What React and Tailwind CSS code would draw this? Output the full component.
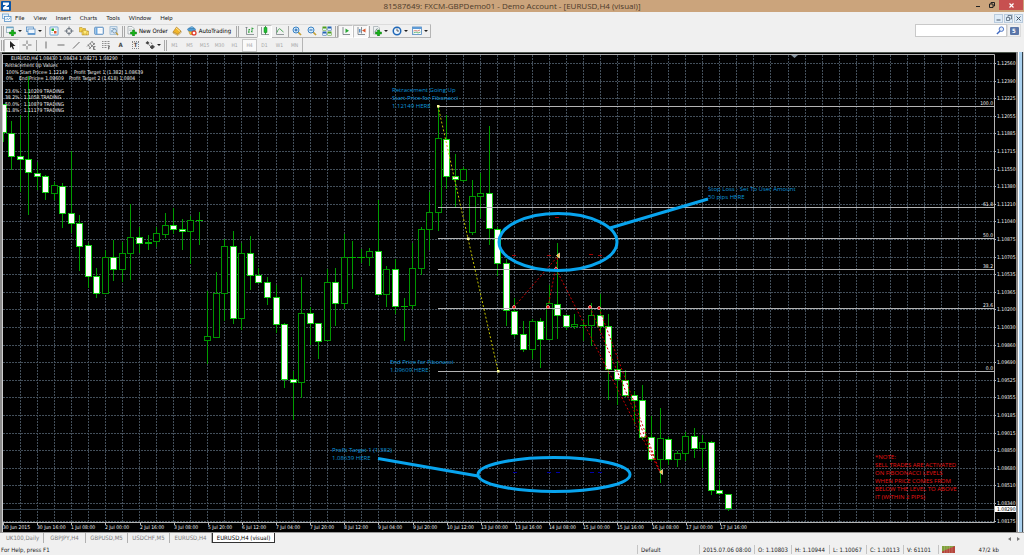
import React, { useState } from 'react';

const MENU = ['File', 'View', 'Insert', 'Charts', 'Tools', 'Window', 'Help'];
const TIMEFRAMES = ['M1', 'M5', 'M15', 'M30', 'H1', 'H4', 'D1', 'W1', 'MN'];
const TABS = ['UK100,Daily', 'GBPJPY,H4', 'GBPUSD,M5', 'USDCHF,M5', 'EURUSD,H4', 'EURUSD,H4 (visual)'];

const PRICES = [
  '1.12560', '1.12390', '1.12225', '1.12055', '1.11885', '1.11715', '1.11550', '1.11380', '1.11210',
  '1.11040', '1.10875', '1.10705', '1.10535', '1.10365', '1.10200', '1.10030', '1.09860', '1.09690',
  '1.09525', '1.09355', '1.09185', '1.09015', '1.08850', '1.08680', '1.08510', '1.08340', '1.08175',
];

const TIMES = [
  '30 Jun 2015', '30 Jun 16:00', '1 Jul 08:00', '2 Jul 00:00', '2 Jul 16:00', '3 Jul 08:00', '5 Jul 20:00',
  '6 Jul 12:00', '7 Jul 04:00', '7 Jul 20:00', '8 Jul 12:00', '9 Jul 04:00', '9 Jul 20:00', '10 Jul 12:00',
  '13 Jul 00:00', '13 Jul 16:00', '14 Jul 08:00', '15 Jul 00:00', '15 Jul 16:00', '16 Jul 08:00',
  '17 Jul 00:00', '17 Jul 16:00',
];

const FIB_LEVELS = [
  ['100.0', 106], ['61.8', 207], ['50.0', 238], ['38.2', 269], ['23.6', 308], ['0.0', 371],
];

// [wick top, wick bottom, body top, body bottom, kind]  d = down, u = up, x = doji
const CANDLES = [
  [104, 142, 104, 133, 'd'], [121, 170, 133, 157, 'd'], [115, 192, 156, 160, 'd'], [76, 215, 159, 173, 'd'],
  [162, 190, 173, 177, 'd'], [175, 200, 176, 193, 'd'], [182, 200, 185, 194, 'u'], [183, 228, 186, 214, 'd'],
  [151, 233, 213, 224, 'd'], [215, 271, 223, 247, 'd'], [243, 288, 245, 277, 'd'], [268, 298, 276, 294, 'd'],
  [250, 294, 257, 294, 'u'], [240, 281, 257, 270, 'd'], [242, 282, 253, 270, 'u'], [204, 280, 237, 254, 'u'],
  [227, 253, 237, 244, 'd'], [235, 250, 242, 244, 'x'], [227, 247, 233, 242, 'u'], [213, 238, 225, 235, 'u'],
  [208, 234, 225, 230, 'd'], [219, 250, 229, 232, 'd'], [216, 264, 220, 232, 'u'], [212, 245, 220, 221, 'x'],
  [291, 364, 336, 341, 'u'], [272, 338, 293, 338, 'u'], [239, 321, 246, 294, 'u'], [231, 324, 246, 319, 'd'],
  [243, 330, 253, 319, 'u'], [236, 290, 253, 276, 'd'], [268, 283, 275, 283, 'd'], [277, 305, 282, 298, 'd'],
  [285, 333, 297, 325, 'd'], [323, 388, 324, 380, 'd'], [371, 420, 379, 383, 'd'], [277, 398, 313, 383, 'u'],
  [307, 345, 313, 324, 'd'], [323, 359, 323, 342, 'd'], [269, 341, 282, 341, 'u'], [268, 326, 282, 304, 'd'],
  [234, 309, 257, 304, 'u'], [241, 289, 257, 258, 'x'], [249, 263, 257, 258, 'x'], [248, 266, 251, 258, 'u'],
  [200, 295, 251, 295, 'd'], [266, 307, 269, 295, 'u'], [259, 314, 269, 307, 'd'], [298, 341, 306, 307, 'x'],
  [243, 309, 268, 306, 'u'], [227, 275, 229, 269, 'u'], [192, 250, 212, 230, 'u'], [106, 231, 138, 213, 'u'],
  [115, 189, 139, 177, 'd'], [154, 207, 176, 180, 'd'], [167, 182, 169, 181, 'u'], [180, 235, 196, 233, 'u'],
  [173, 218, 193, 197, 'u'], [126, 245, 193, 229, 'd'], [227, 276, 229, 264, 'd'], [259, 326, 263, 311, 'd'],
  [298, 337, 311, 335, 'd'], [321, 352, 334, 350, 'd'], [319, 359, 321, 350, 'u'], [318, 368, 321, 340, 'd'],
  [285, 340, 303, 340, 'u'], [243, 339, 304, 316, 'd'], [315, 330, 315, 327, 'd'], [314, 329, 324, 327, 'u'],
  [320, 341, 325, 326, 'x'], [303, 346, 315, 326, 'u'], [294, 333, 315, 327, 'd'], [314, 400, 326, 370, 'd'],
  [361, 405, 369, 380, 'd'], [370, 397, 380, 396, 'd'], [391, 424, 395, 401, 'd'], [385, 440, 400, 438, 'd'],
  [416, 461, 437, 460, 'd'], [408, 483, 438, 460, 'u'], [437, 465, 439, 460, 'd'], [451, 467, 453, 460, 'u'],
  [432, 461, 436, 454, 'u'], [428, 458, 436, 449, 'd'], [435, 468, 442, 449, 'u'], [441, 495, 442, 491, 'd'],
  [480, 495, 490, 494, 'd'], [494, 511, 494, 509, 'd'],
];

const NOTES = [
  { x: 392, y: 92, lines: ['Retracement Going Up', 'Start Price for Fibonacci', '1.12149 HERE'] },
  { x: 708, y: 191, lines: ['Stop Loss - Set To User Amount', '50 pips HERE'] },
  { x: 390, y: 364, lines: ['End Price for Fibonacci', '1.09609 HERE'] },
  { x: 332, y: 452, lines: ['Profit Target 1 (1.382)', '1.08639 HERE'] },
];

const WARNING = [
  '*NOTE:', 'SELL TRADES ARE ACTIVATED', 'ON FIBOONACCI LEVELS', 'WHEN PRICE COMES FROM',
  'BELOW THE LEVEL TO ABOVE', 'IT (WITHIN 2 PIPS)',
];

const HEADER = [
  [11, 60, 'EURUSD,H4  1.08430 1.08434 1.08271 1.08290'],
  [5, 67, 'Retracement Up Values'],
  [6, 74, '100% Start Price= 1.12149'],
  [74, 74, 'Profit Target 1 (1.382) 1.08639'],
  [6, 80, '0%'],
  [19, 80, 'End Price= 1.09609'],
  [69, 80, 'Profit Target 2 (1.618) 1.0804'],
  [5, 93, '23.6% : 1.10209 TRADING'],
  [5, 99, '38.2% : 1.1058 TRADING'],
  [5, 106, '50.0% : 1.10879 TRADING'],
  [5, 112, '61.8% : 1.11179 TRADING'],
];

const TRADES = [
  [514, 307, 558, 256], [548, 307, 558, 256], [556, 269, 660, 472], [590, 307, 660, 472], [599, 308, 660, 472],
];

function Icon({ children, size = 'size-[10px]' }) {
  return <svg viewBox="0 0 20 20" className={`${size} shrink-0`} aria-hidden="true">{children}</svg>;
}

const plus = <path d="M11 8h4v4h4v4h-4v4h-4v-4H7v-4h4z" fill="#17b317" stroke="#0b7a10" />;

const ICONS = {
  newChart: (
    <Icon>
      <rect x="1" y="2" width="14" height="11" fill="#f3f8fb" stroke="#5d8191" />
      <path d="M1 3h14" stroke="#6fa8c9" strokeWidth="3" />
      {plus}
    </Icon>
  ),
  profiles: (
    <Icon>
      <rect x="1" y="2" width="14" height="9" fill="#e4f0fb" stroke="#4f86bd" strokeWidth="1.5" />
      <rect x="4" y="6" width="14" height="11" fill="#eef6fd" stroke="#4f86bd" strokeWidth="1.5" />
      <path d="M4 14h14v3H4z" fill="#5c97d0" />
    </Icon>
  ),
  market: (
    <Icon>
      <rect x="2" y="2" width="16" height="16" rx="1" fill="#f8fcff" stroke="#4b8fc9" strokeWidth="1.6" />
      <path d="M5 5h5v5H5z" fill="#26a83a" />
      <path d="M10 10h5v5h-5z" fill="#e0532c" />
      <path d="M12 6h4M5 13h3" stroke="#9cc" strokeWidth="1.5" />
    </Icon>
  ),
  target: (
    <Icon>
      <circle cx="10" cy="10" r="5.5" fill="none" stroke="#66707a" strokeWidth="1.8" />
      <path d="M10 1v7M10 12v7M1 10h7M12 10h7" stroke="#66707a" strokeWidth="1.8" />
    </Icon>
  ),
  navigator: (
    <Icon>
      <path d="M1 3h5l2 2h5v7H1z" fill="#f6d24a" stroke="#ad851b" />
      <path d="M6 8h5l2 2h6v8H6z" fill="#fbdf6d" stroke="#ad851b" />
      <path d="M12 7l2 3 4 .5-3 3 1 4-4-2-4 2 1-4-3-3 4-.5z" fill="#ffec7c" stroke="#b98b16" />
    </Icon>
  ),
  terminal: (
    <Icon>
      <rect x="1.5" y="2.5" width="17" height="14" rx="1" fill="#fff" stroke="#3c7ab8" strokeWidth="1.8" />
      <path d="M3 4h4v12H3z" fill="#6ea9df" />
      <path d="M9 7h7M9 10h7" stroke="#dce6ef" />
    </Icon>
  ),
  tester: (
    <Icon>
      <rect x="2" y="1.5" width="14" height="15" fill="#e4eef7" stroke="#7aa2c4" strokeWidth="1.3" />
      <path d="M5 5h8M5 13V8" stroke="#4682b4" />
      <circle cx="11" cy="10" r="4" fill="#cfe8fb" stroke="#768ca0" strokeWidth="1.5" />
      <path d="M14 13l4 5" stroke="#c19a39" strokeWidth="2.6" />
    </Icon>
  ),
  order: (
    <Icon>
      <path d="M2 1h8l4 4v11H2z" fill="#f6f8f8" stroke="#6d7a80" />
      <path d="M4 6h6M4 9h5" stroke="#8c9aa1" />
      {plus}
    </Icon>
  ),
  editor: (
    <Icon>
      <path d="M2 12l7-10 9 8-6 7z" fill="#f0b52c" stroke="#a36c10" />
      <path d="M2 12l10 5 6-7v3l-6 6-10-5z" fill="#fff1b5" stroke="#a36c10" />
      <path d="M8 4l8 7" stroke="#ffe494" strokeWidth="2" />
    </Icon>
  ),
  auto: (
    <Icon>
      <path d="M3 9h14l-3 8H6z" fill="#f2c53a" stroke="#af8120" />
      <ellipse cx="9" cy="7" rx="8" ry="3.6" fill="#4c9bd4" stroke="#2a6a9f" />
      <path d="M5 5c1-5 8-5 9 0z" fill="#75bbea" stroke="#2a6a9f" />
      <circle cx="14" cy="14" r="5.2" fill="#dd2d1c" />
      <path d="M11.5 11.5h5v5h-5z" fill="#fff" />
    </Icon>
  ),
  bars: (
    <Icon>
      <path d="M3 2v15h15M1 4l2-2 2 2" fill="none" stroke="#6a7278" strokeWidth="1.4" />
      <path d="M8 6v8M6 12h2M8 7h2M14 3v10M12 11h2M14 5h3" stroke="#249b32" strokeWidth="1.7" />
    </Icon>
  ),
  candles: (
    <Icon>
      <path d="M3 2v15h15" fill="none" stroke="#6a7278" strokeWidth="1.4" />
      <path d="M11 0v17" stroke="#12881f" strokeWidth="1.6" />
      <path d="M8 3h6v10H8z" fill="#20bd34" stroke="#12881f" />
    </Icon>
  ),
  line: (
    <Icon>
      <path d="M3 2v15h15" fill="none" stroke="#6a7278" strokeWidth="1.4" />
      <path d="M4 13c3-9 6-9 8-5l5 4" fill="none" stroke="#2d9b3b" strokeWidth="1.6" />
    </Icon>
  ),
  zoomIn: (
    <Icon>
      <path d="M12 12l6 6" stroke="#c6a036" strokeWidth="3.4" />
      <circle cx="8" cy="8" r="6" fill="#d4ecfd" stroke="#3b82c4" strokeWidth="2" />
      <path d="M8 5v6M5 8h6" stroke="#1d62ac" strokeWidth="2" />
    </Icon>
  ),
  zoomOut: (
    <Icon>
      <path d="M12 12l6 6" stroke="#c6a036" strokeWidth="3.4" />
      <circle cx="8" cy="8" r="6" fill="#d4ecfd" stroke="#3b82c4" strokeWidth="2" />
      <path d="M5 8h6" stroke="#1d62ac" strokeWidth="2" />
    </Icon>
  ),
  tile: (
    <Icon>
      <path d="M1 1h8v8H1zM11 11h8v8h-8z" fill="#4e9e1e" />
      <path d="M11 1h8v8h-8zM1 11h8v8H1z" fill="#2664b4" />
      <path d="M2 5h6v3H2zM12 5h6v3h-6zM2 15h6v3H2zM12 15h6v3h-6z" fill="#e6f2fa" />
    </Icon>
  ),
  scroll: (
    <Icon>
      <path d="M4 2v15h14" fill="none" stroke="#6a7278" strokeWidth="1.6" />
      <path d="M9 5l7 4.5-7 4.5z" fill="#26a534" />
    </Icon>
  ),
  shift: (
    <Icon>
      <path d="M4 2v15h14M11 2v13" fill="none" stroke="#6a7278" strokeWidth="1.6" />
      <path d="M19 5v8l-7-4z" fill="#d8552d" />
      <path d="M6 6h3v7H6z" fill="#5a93c9" />
    </Icon>
  ),
  indicators: (
    <Icon>
      <path d="M3 1h9l3 3v12H3z" fill="#edf1f2" stroke="#7d8a90" />
      <path d="M5 12c3 0 3-7 6-7" fill="none" stroke="#5a6970" strokeWidth="1.5" />
      {plus}
    </Icon>
  ),
  clock: (
    <Icon>
      <circle cx="10" cy="10" r="7.5" fill="#eef6fd" stroke="#1f67b7" strokeWidth="3" />
      <path d="M10 5v5h4" fill="none" stroke="#333" strokeWidth="1.5" />
    </Icon>
  ),
  template: (
    <Icon>
      <rect x="1" y="2" width="18" height="15" fill="#f7fbff" stroke="#4f86bd" strokeWidth="1.6" />
      <path d="M1 4h18" stroke="#5e9bd6" strokeWidth="4" />
      <path d="M3 10l4-1 4 1 5-2" fill="none" stroke="#cf5a40" strokeWidth="1.4" />
      <path d="M3 14l5-2 4 2 5-2" fill="none" stroke="#35a145" strokeWidth="1.4" />
    </Icon>
  ),
  cursor: <Icon><path d="M6 2v14l3-3 3 6 2-1-2-6h5z" fill="#222" /></Icon>,
  cross: <Icon><path d="M10 1v7M10 12v7M1 10h7M12 10h7" stroke="#555" strokeWidth="1.6" /></Icon>,
  vline: <Icon><path d="M10 3v14" stroke="#555" strokeWidth="1.7" /></Icon>,
  hline: <Icon><path d="M3 10h14" stroke="#555" strokeWidth="1.7" /></Icon>,
  trend: <Icon><path d="M4 17L17 4" stroke="#555" strokeWidth="1.7" /></Icon>,
  channel: (
    <Icon>
      <path d="M2 13L13 2M6 18L18 6M4 9l5 8M8 6l5 8M12 3l5 7" stroke="#555" strokeWidth="1.3" />
      <path d="M19 13h-4v6h4M15 16h3" fill="none" stroke="#444" strokeWidth="1.3" />
    </Icon>
  ),
  fibo: (
    <Icon>
      <path d="M2 3h16M2 7h16M2 11h16M2 15h10" stroke="#666" strokeWidth="1.4" strokeDasharray="2 1" />
      <path d="M18 13h-3v6M15 16h3" fill="none" stroke="#444" strokeWidth="1.3" />
    </Icon>
  ),
  shapes: (
    <Icon>
      <path d="M1 6l4-4 4 4-4 3z" fill="#444" />
      <path d="M7 9l4 3M12 5l2 3M10 14l5-4 4 4-5 4z" fill="#444" stroke="#444" strokeWidth="1.5" />
    </Icon>
  ),
  mdi: (
    <Icon>
      <rect x="1" y="2" width="12" height="9" fill="#e8f3fc" stroke="#68a2d2" strokeWidth="1.5" />
      <rect x="5" y="7" width="13" height="10" fill="#f3f9fe" stroke="#4d8cc3" strokeWidth="1.5" />
      <path d="M7 14l3-3 3 2 4-4" fill="none" stroke="#4d8cc3" strokeWidth="1.4" />
    </Icon>
  ),
};

function ToolButton({ icon, label, menu, pressed, children }) {
  return (
    <button
      type="button"
      aria-label={label}
      className={`flex h-[13px] items-center justify-center ${menu ? 'w-[20px] gap-[2px]' : children ? 'gap-[2px] px-[2px]' : 'w-[15px]'} ${pressed ? 'border border-[#c3c3c3] border-r-white border-b-white bg-[#f8f8f8]' : ''}`}
    >
      {icon && ICONS[icon]}
      {children}
      {menu && (
        <svg viewBox="0 0 4 2" className="h-[2px] w-[4px] shrink-0" aria-hidden="true">
          <path d="M0 0h4L2 2z" fill="#222" />
        </svg>
      )}
    </button>
  );
}

const SEPS = {
  line: ['w-[2px]', 'w-px'],
  space: ['w-[4px]', 'w-px'],
  grip: ['w-[4px]', 'w-[3px] border-r'],
  group: ['w-[9px]', 'w-[3px] border-r'],
};

function Sep({ kind = 'line' }) {
  const [outer, inner] = SEPS[kind];
  return (
    <span className={`flex h-[13px] items-center justify-center ${outer}`}>
      <span className={`h-[11px] border-l border-[#a9a9a9] ${inner}`} />
    </span>
  );
}

function Toolbars() {
  const [frame, setFrame] = useState('H4');

  return (
    <div className="flex flex-col items-start text-[6px] leading-[8px]">
      <div className="flex h-[14px] items-center border-t border-r border-b border-t-[#dcdcdc] border-r-[#b5b5b5] border-b-[#b5b5b5]">
        <Sep kind="grip" />
        <ToolButton icon="newChart" label="New chart" menu />
        <ToolButton icon="profiles" label="Profiles" menu />
        <Sep />
        <ToolButton icon="market" label="Market Watch" />
        <ToolButton icon="target" label="Data Window" />
        <ToolButton icon="navigator" label="Navigator" />
        <ToolButton icon="terminal" label="Terminal" />
        <ToolButton icon="tester" label="Strategy Tester" />
        <Sep kind="grip" />
        <ToolButton icon="order">New Order</ToolButton>
        <ToolButton icon="editor" label="MetaEditor" />
        <ToolButton icon="auto">AutoTrading</ToolButton>
        <Sep kind="group" />
        <ToolButton icon="bars" label="Bar chart" />
        <ToolButton icon="candles" label="Candlesticks" pressed />
        <ToolButton icon="line" label="Line chart" />
        <Sep />
        <ToolButton icon="zoomIn" label="Zoom in" />
        <ToolButton icon="zoomOut" label="Zoom out" />
        <ToolButton icon="tile" label="Tile windows" />
        <Sep kind="grip" />
        <ToolButton icon="scroll" label="Auto scroll" pressed />
        <ToolButton icon="shift" label="Chart shift" pressed />
        <Sep />
        <ToolButton icon="indicators" label="Indicators" menu />
        <ToolButton icon="clock" label="Periods" menu />
        <ToolButton icon="template" label="Templates" menu />
      </div>
      <div className="flex h-[14px] items-center border-r border-[#b5b5b5]">
        <Sep kind="grip" />
        <ToolButton icon="cursor" label="Cursor" pressed />
        <ToolButton icon="cross" label="Crosshair" />
        <Sep kind="space" />
        <ToolButton icon="vline" label="Vertical line" />
        <ToolButton icon="hline" label="Horizontal line" />
        <ToolButton icon="trend" label="Trendline" />
        <ToolButton icon="channel" label="Channel" />
        <ToolButton icon="fibo" label="Fibonacci" />
        <ToolButton label="Text"><span className="w-[11px] text-center font-bold text-[#444]">A</span></ToolButton>
        <ToolButton label="Text label"><span className="mx-[2px] w-[7px] border border-dotted border-[#888] text-center leading-[6px] font-bold text-[#444]">T</span></ToolButton>
        <ToolButton icon="shapes" label="Arrows" menu />
        <Sep kind="grip" />
        {TIMEFRAMES.map((t) => (
          <button
            key={t}
            type="button"
            onClick={() => setFrame(t)}
            className={`h-[13px] w-[15px] text-center text-[5px] text-[#a6a6a6] ${frame === t ? 'border border-[#c8c8c8] bg-[#fafafa]' : ''}`}
          >
            {t}
          </button>
        ))}
      </div>
    </div>
  );
}

function Logo() {
  return (
    <svg viewBox="0 0 20 20" className="size-[10px]" aria-hidden="true">
      <rect width="20" height="20" rx="2" fill="#0b55a6" />
      <path d="M4 3h12v4l-6 5h6v5H4v-4l6-5H4z" fill="#fff" />
    </svg>
  );
}

function TitleBar() {
  return (
    <header className="flex h-[12px] items-center bg-[#cba47c]">
      <div className="w-[53px] pl-[1px]"><Logo /></div>
      <h1 className="flex-1 text-center font-['Open_Sans',sans-serif] text-[8px] leading-[12px] text-[#4b3a2a]">
        81587649: FXCM-GBPDemo01 - Demo Account - [EURUSD,H4 (visual)]
      </h1>
      <div className="flex h-full items-start">
        <button type="button" aria-label="Minimize" className="flex h-[10px] w-[14px] items-center justify-center">
          <svg viewBox="0 0 6 6" className="size-[6px]"><path d="M1 4h4v1H1z" fill="#222" /></svg>
        </button>
        <button type="button" aria-label="Restore" className="flex h-[10px] w-[14px] items-center justify-center">
          <svg viewBox="0 0 12 12" className="size-[6px]"><path d="M1 4h7v7H1zM4 4V1h7v7H8" fill="none" stroke="#222" strokeWidth="2" /></svg>
        </button>
        <button type="button" aria-label="Close" className="mr-[1px] flex h-[10px] w-[24px] items-center justify-center bg-[#c75050]">
          <svg viewBox="0 0 10 10" className="size-[5px]"><path d="M1 1l8 8M9 1l-8 8" stroke="#fff" strokeWidth="2.4" /></svg>
        </button>
      </div>
    </header>
  );
}

function MenuBar() {
  const box = 'flex h-[9px] w-[9px] items-center justify-center border border-[#b9cbdd] bg-[#dfecf8]';
  return (
    <div className="flex h-[12px] items-center bg-[#f0f0f0] pr-[1px] pl-[2px]">
      {ICONS.mdi}
      <nav className="ml-[3px] flex flex-1 gap-[9px] font-['Lato',sans-serif] text-[6px] leading-[10px] text-[#1c1c1c]">
        {MENU.map((m) => <button key={m} type="button">{m}</button>)}
      </nav>
      <div className="flex gap-[1px]">
        <button type="button" aria-label="Minimize chart" className={box}>
          <svg viewBox="0 0 10 10" className="size-[5px]"><path d="M1 7h8v2H1z" fill="#456" /></svg>
        </button>
        <button type="button" aria-label="Restore chart" className={box}>
          <svg viewBox="0 0 12 12" className="size-[6px]"><path d="M1 5h6v6H1zM4 4V1h7v7H8" fill="none" stroke="#456" strokeWidth="1.4" /></svg>
        </button>
        <button type="button" aria-label="Close chart" className={box}>
          <svg viewBox="0 0 10 10" className="size-[5px]"><path d="M1 1l8 8M9 1l-8 8" stroke="#456" strokeWidth="2" /></svg>
        </button>
      </div>
    </div>
  );
}

function SearchBox() {
  return (
    <div className="flex h-[13px] items-stretch pr-[3px]">
      <label className="flex w-[92px] items-center border border-[#c9c9c9] bg-white">
        <input type="text" aria-label="Search" className="min-w-0 flex-1 bg-transparent px-[2px] text-[6px] outline-none" />
        <svg viewBox="0 0 20 20" className="mr-[1px] size-[9px]" aria-hidden="true">
          <circle cx="12" cy="7" r="5" fill="#e3eefb" stroke="#3e68c0" strokeWidth="2" />
          <path d="M9 11l-7 7" stroke="#3e68c0" strokeWidth="3" />
        </svg>
      </label>
      <button type="button" className="flex w-[14px] items-center justify-center border border-[#dcdcdc]">
        <span className="h-[8px] w-[9px] rounded-[1px] bg-[#5b76a8] text-center text-[6px] leading-[8px] font-bold text-white">5</span>
      </button>
    </div>
  );
}

function Candle({ index, data }) {
  const [high, low, top, bottom, kind] = data;
  const x = Math.floor(3 + index * 8.533);
  return (
    <g shapeRendering="crispEdges">
      <rect x={x} y={high} width="1" height={low - high} fill="#009c00" />
      {kind === 'x' && <rect x={x - 3} y={top} width="7" height={bottom - top} fill="#00b400" />}
      {kind !== 'x' && (
        <rect
          x={x - 3 + 0.5}
          y={top + 0.5}
          width="6"
          height={bottom - top - 1}
          fill={kind === 'd' ? '#fff' : '#000'}
          stroke={kind === 'd' ? '#14d014' : '#009400'}
        />
      )}
    </g>
  );
}

function Chart() {
  return (
    <svg viewBox="0 52 1016 480" className="block h-auto min-w-0 flex-1 bg-black" role="img" aria-label="EURUSD,H4">
      <g stroke="#434f5a" strokeDasharray="2 1" shapeRendering="crispEdges">
        {PRICES.map((p, i) => {
          const y = Math.round(63 + i * 17.6) + 0.5;
          return <line key={p} x1="3" x2="994" y1={y} y2={y} />;
        })}
        {Array.from({ length: 57 }, (_, i) => {
          const x = Math.floor(20 + i * 17.067) + 0.5;
          return <line key={i} x1={x} x2={x} y1="55" y2="522" />;
        })}
      </g>
      <path d="M0 509.5H994" stroke="#34434f" />

      {CANDLES.map((c, i) => <Candle key={i} index={i} data={c} />)}

      <g className="font-['DejaVu_Sans_Condensed','DejaVu_Sans',sans-serif] text-[5px]" fill="#f0f0f0">
        {FIB_LEVELS.map(([label, y]) => (
          <g key={label}>
            <path d={`M438 ${y + 0.5}H994`} stroke="#b4b4b4" />
            <text x="993" y={y - 1} textAnchor="end">{label}</text>
          </g>
        ))}
        {HEADER.map(([x, y, text]) => <text key={text} x={x} y={y}>{text}</text>)}
        {PRICES.map((p, i) => (
          <g key={p}>
            <path d={`M994 ${Math.round(63 + i * 17.6) + 0.5}h2`} stroke="#b4b4b4" />
            <text x="997" y={Math.round(65 + i * 17.6)}>{p}</text>
          </g>
        ))}
        {TIMES.map((t, i) => (
          <g key={t}>
            <path d={`M${Math.round(3 + i * 34.133) + 0.5} 522v3`} stroke="#b4b4b4" />
            <text x={Math.round(3 + i * 34.133)} y="529">{t}</text>
          </g>
        ))}
        <rect x="995" y="506" width="21" height="6" fill="#fff" />
        <text x="997" y="511" fill="#000">1.08290</text>
      </g>

      <path d="M438 106L498 371" fill="none" stroke="#c4c400" strokeDasharray="2 2" />
      <path d="M437 105h2.5v2.5H437zM467 237.5h2.5v2.5H467zM497 370h2.5v2.5H497z" fill="#ffffa0" />

      <g stroke="#c80000" strokeDasharray="2 2">
        {TRADES.map(([x1, y1, x2, y2]) => <line key={`${x1}-${x2}`} x1={x1} y1={y1} x2={x2} y2={y2} />)}
      </g>
      {TRADES.map(([x, y]) => (
        <path key={x} d={`M${x - 2} ${y}l2-2 2 2-2 2z`} fill="#e81818" stroke="#f0d0d0" strokeWidth="0.6" />
      ))}
      <path d="M559.5 253v5l-3-2.5zM662.5 469.5v5l-3-2.5z" fill="#ffb52e" stroke="#fff2c8" strokeWidth="0.7" />
      <path d="M512 255.5h4M547 255.5h4M589 254.5h4M598 255.5h4M555 217.5h4" stroke="#a00000" />
      <path d="M513 472.5h4M547 472.5h4M556 472.5h4M590 472.5h4M598 472.5h4" stroke="#0000a8" />

      <g fill="none" stroke="#08a4ee" strokeWidth="3">
        <ellipse cx="558" cy="242" rx="59" ry="28.5" />
        <ellipse cx="554" cy="474.5" rx="76" ry="17" />
        <path d="M610 228L708 199M378 458.5L478 476" />
      </g>

      <g className="font-['Open_Sans',sans-serif] text-[6px]">
        {NOTES.map((n) => n.lines.map((line, i) => (
          <text key={line} x={n.x} y={n.y + i * 8} fill="#0c96dc">{line}</text>
        )))}
        {WARNING.map((line, i) => (
          <text key={line} x="875" y={459 + i * 8} fill="#e81414">{line}</text>
        ))}
      </g>

      <path d="M791 55h7l-3.5 3z" fill="#8594a0" />
      <path d="M2 54.5H994.5V522.5H2" fill="none" stroke="#b4b4b4" />
      <path d="M0 52.5H1016" stroke="#4c554c" />
      <path d="M0 52h2v480H0z" fill="#8c8c8c" />
      <path d="M2.5 54v478" stroke="#d0d0d0" />
    </svg>
  );
}

function Tabs() {
  const [active, setActive] = useState('EURUSD,H4 (visual)');

  return (
    <div className="flex h-[12px] items-stretch border-t border-[#9a9a9a] bg-[#f0f0f0] pl-[2px] leading-[8px]">
      {TABS.map((t) => (
        <button
          key={t}
          type="button"
          onClick={() => setActive(t)}
          className={active === t
            ? 'h-[10px] w-[63px] border border-t-0 border-[#333] bg-white text-center text-black'
            : 'h-[10px] w-[42px] border-r border-[#b0b0b0] text-center text-[#7c7c7c]'}
        >
          {t}
        </button>
      ))}
      <div className="ml-auto flex items-center gap-[6px] pr-[4px]">
        <button type="button" aria-label="Scroll tabs left"><svg viewBox="0 0 3 4" className="h-[4px] w-[3px]"><path d="M3 0v4L0 2z" fill="#777" /></svg></button>
        <button type="button" aria-label="Scroll tabs right"><svg viewBox="0 0 3 4" className="h-[4px] w-[3px]"><path d="M0 0v4l3-2z" fill="#777" /></svg></button>
      </div>
    </div>
  );
}

function StatusBar() {
  const cell = 'border-l border-[#c4c4c4] pl-[3px] whitespace-nowrap';
  return (
    <footer className="flex h-[11px] items-center bg-[#f0f0f0] leading-[9px] text-[#222]">
      <span className="flex-1 pl-[1px]">For Help, press F1</span>
      <span className={`${cell} w-[62px]`}>Default</span>
      <span className={`${cell} w-[55px]`}>2015.07.06 08:00</span>
      <span className={`${cell} w-[37px]`}>O: 1.10803</span>
      <span className={`${cell} w-[38px]`}>H: 1.10944</span>
      <span className={`${cell} w-[37px]`}>L: 1.10067</span>
      <span className={`${cell} w-[37px]`}>C: 1.10113</span>
      <span className={`${cell} w-[35px]`}>V: 61101</span>
      <span className={`${cell} flex w-[86px] items-center`}>
        <svg viewBox="0 0 26 14" className="h-[7px] w-[13px]" aria-hidden="true">
          <path d="M0 0h26v14H0z" fill="#b5443c" />
          <path d="M0 0h26L0 11z" fill="#7fa23c" />
          <path d="M5 0v14M10 0v14M15 0v14M20 0v14" stroke="#d8b8a0" strokeWidth="0.6" />
        </svg>
        <span className="ml-auto pr-[25px]">47/2 kb</span>
      </span>
    </footer>
  );
}

export default function App() {
  return (
    <div className="flex min-h-screen w-full flex-col bg-[#f0f0f0] font-['DejaVu_Sans_Condensed','DejaVu_Sans',sans-serif] text-[6px]">
      <TitleBar />
      <MenuBar />
      <div className="flex items-start justify-between">
        <Toolbars />
        <SearchBox />
      </div>
      <main className="flex">
        <Chart />
        <div className="flex w-[8px]" aria-hidden="true">
          <span className="w-[2px] bg-[#8c8c8c]" />
          <span className="w-[4px] border-l border-white bg-[#a9d0ee]" />
          <span className="w-px bg-[#33414d]" />
          <span className="w-px bg-[#d8d8d8]" />
        </div>
      </main>
      <Tabs />
      <StatusBar />
    </div>
  );
}
